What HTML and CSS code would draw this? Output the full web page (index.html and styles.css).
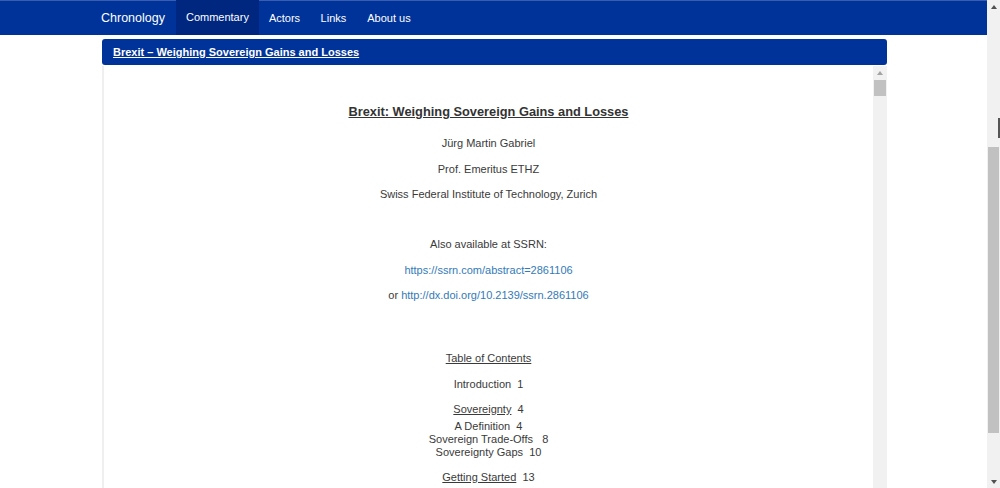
FILE: index.html
```html
<!DOCTYPE html>
<html lang="en">
<head>
<meta charset="utf-8">
<title>Commentary – Brexit</title>
<link rel="stylesheet" href="styles.css">
</head>
<body>
<div class="viewport">
  <div class="page">
    <nav class="navbar">
      <div class="container nav-inner">
        <a class="brand" href="#">Chronology</a>
        <ul class="nav-links">
          <li class="active"><a href="#">Commentary</a></li>
          <li><a href="#">Actors</a></li>
          <li><a href="#">Links</a></li>
          <li><a href="#">About us</a></li>
        </ul>
      </div>
    </nav>
    <main class="container">
      <section class="panel">
        <header class="panel-heading"><a href="#">Brexit – Weighing Sovereign Gains and Losses</a></header>
        <div class="panel-body">
          <article class="doc">
            <h1 class="doc-title">Brexit: Weighing Sovereign Gains and Losses</h1>
            <p class="line">Jürg Martin Gabriel</p>
            <p class="line">Prof. Emeritus ETHZ</p>
            <p class="line">Swiss Federal Institute of Technology, Zurich</p>
            <div class="gap-s"></div>
            <p class="line">Also available at SSRN:</p>
            <p class="line"><a href="#">https://ssrn.com/abstract=2861106</a></p>
            <p class="line">or <a href="#">http://dx.doi.org/10.2139/ssrn.2861106</a></p>
            <div class="gap-l"></div>
            <p class="line"><u>Table of Contents</u></p>
            <p class="line">Introduction&nbsp; 1</p>
            <p class="line tight"><u>Sovereignty</u>&nbsp; 4</p>
            <div class="sublist">
              <div>A Definition&nbsp; 4</div>
              <div>Sovereign Trade-Offs&nbsp;&nbsp; 8</div>
              <div>Sovereignty Gaps&nbsp; 10</div>
            </div>
            <p class="line"><u>Getting Started</u>&nbsp; 13</p>
          </article>
          <div class="scrollbar inner-bar">
            <div class="sb-arrow up light"></div>
            <div class="sb-thumb inner-thumb"></div>
          </div>
        </div>
      </section>
    </main>
  </div>
  <div class="scrollbar page-bar">
    <div class="sb-arrow up"></div>
    <div class="sb-space page-space-top"></div>
    <div class="sb-thumb page-thumb"></div>
    <div class="sb-space page-space-bottom"></div>
    <div class="sb-arrow down"></div>
    <span class="cursor-mark"></span>
  </div>
</div>
</body>
</html>
```

FILE: styles.css
```css
* { box-sizing: border-box; }

html, body {
  margin: 0;
  padding: 0;
  height: 488px;
  overflow: hidden;
  background: #fff;
  font-family: "Liberation Sans", Arial, sans-serif;
  color: #333;
}

.viewport {
  display: flex;
  height: 488px;
}

.page {
  flex: 1;
  overflow: hidden;
}

.container {
  width: 787px;
  padding-left: 2px;
  margin: 0 auto;
}

/* navbar */
.navbar {
  background: #003399;
  border-top: 1px solid #3a5db0;
  height: 35px;
}

.nav-inner {
  display: flex;
  align-items: stretch;
  height: 34px;
}

.brand {
  color: #fff;
  text-decoration: none;
  font-size: 12.5px;
  line-height: 34px;
  margin-left: -1px;
  padding-right: 11px;
}

.nav-links {
  display: flex;
  list-style: none;
  margin: 0;
  padding: 0;
}

.nav-links li {
  display: flex;
}

.nav-links a {
  color: #fff;
  text-decoration: none;
  font-size: 11px;
  line-height: 34px;
  padding: 0 10px;
}

.nav-links li + li + li a {
  padding-left: 10.5px;
  padding-right: 10.5px;
}

.nav-links li.active a {
  background: #00277f;
  margin-top: -1px;
  line-height: 35px;
}

/* panel */
.panel {
  margin-top: 4px;
}

.panel-heading {
  background: #003399;
  height: 26px;
  border-radius: 3px;
  padding-left: 11px;
  display: flex;
  align-items: center;
}

.panel-heading a {
  color: #fff;
  font-weight: bold;
  font-size: 11px;
  text-decoration: underline;
}

.panel-body {
  display: flex;
  margin-top: 1px;
  height: 440px;
  border-left: 2px solid #efefef;
}

.doc {
  flex: 1;
  text-align: center;
  padding-top: 37px;
  font-size: 11px;
  color: #3a3a3a;
}

.doc-title {
  font-size: 12.8px;
  font-weight: bold;
  line-height: 18px;
  margin: 0 0 14px;
  text-decoration: underline;
  color: #333;
}

.line {
  margin: 0 0 9.5px;
  line-height: 16px;
}

.line a {
  color: #337ab7;
  text-decoration: none;
}

.line.tight {
  margin-bottom: 2.5px;
}

.gap-s { height: 15px; margin-bottom: 9.5px; }
.gap-l { height: 28px; margin-bottom: 9.5px; }

.sublist {
  line-height: 13px;
  margin-bottom: 10.5px;
}

/* scrollbars */
.scrollbar {
  background: #f1f1f1;
  display: flex;
  flex-direction: column;
  align-items: center;
}

.inner-bar {
  width: 14px;
}

.page-bar {
  width: 13px;
  position: relative;
}

.sb-arrow {
  height: 13px;
  width: 100%;
  display: flex;
  align-items: center;
  justify-content: center;
}

.sb-arrow.up::before {
  content: "";
  border-left: 3.5px solid transparent;
  border-right: 3.5px solid transparent;
  border-bottom: 4px solid #505050;
}

.sb-arrow.down::before {
  content: "";
  border-left: 3.5px solid transparent;
  border-right: 3.5px solid transparent;
  border-top: 4px solid #505050;
}

.sb-arrow.light::before {
  border-bottom-color: #a3a3a3;
}

.sb-thumb {
  background: #c1c1c1;
}

.inner-thumb {
  width: 12px;
  height: 16px;
  margin-top: 1px;
}

.page-space-top { height: 134px; }
.page-thumb { width: 11px; height: 286px; }
.page-space-bottom { flex: 1; }

.cursor-mark {
  position: absolute;
  right: 0;
  top: 118px;
  width: 2px;
  height: 20px;
  background: #555;
}
```
